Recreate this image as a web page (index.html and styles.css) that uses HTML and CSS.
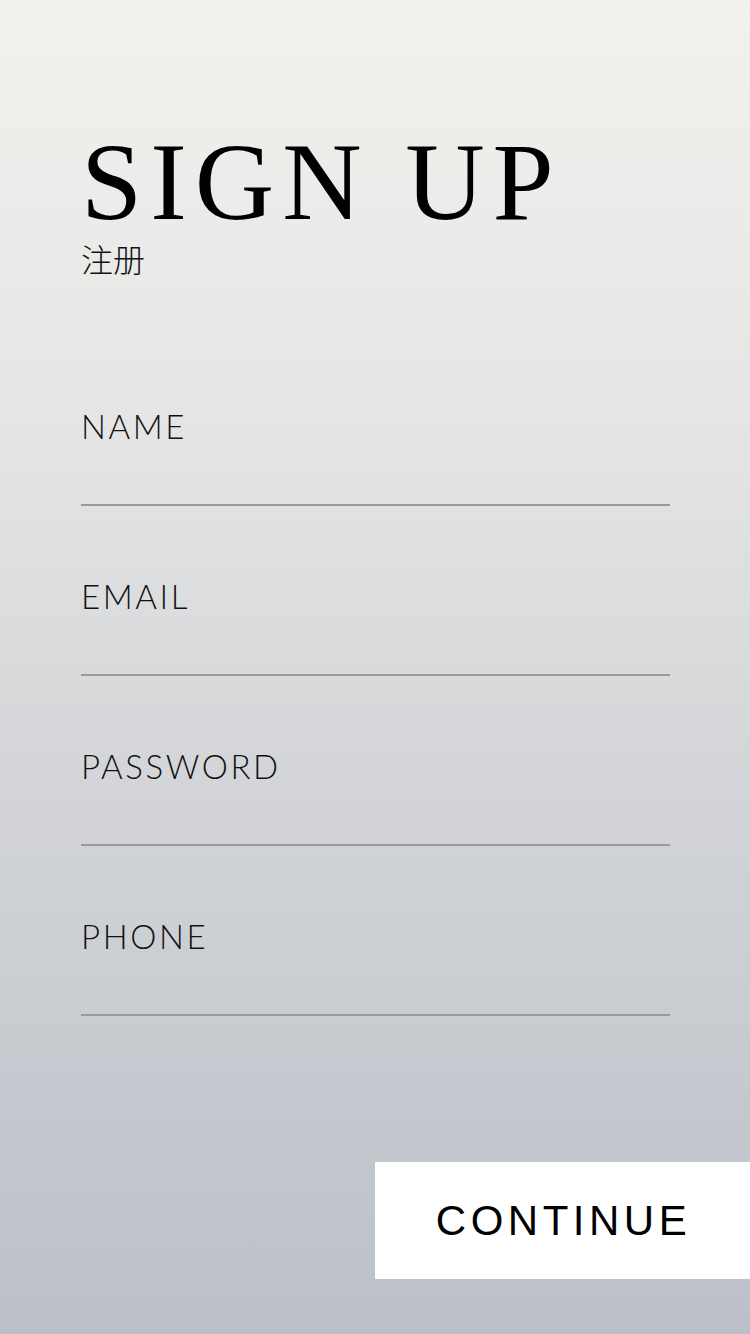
FILE: index.html
```html
<!DOCTYPE html>
<html lang="zh">
<head>
<meta charset="utf-8">
<link rel="stylesheet" href="styles.css">
</head>
<body>
<main class="screen">
  <header class="heading">
    <h1 class="title">SIGN UP</h1>
    <div class="subtitle">注册</div>
  </header>
  <form class="form">
    <label class="field"><span class="label">NAME</span></label>
    <label class="field"><span class="label">EMAIL</span></label>
    <label class="field"><span class="label">PASSWORD</span></label>
    <label class="field"><span class="label">PHONE</span></label>
  </form>
  <div class="actions">
    <button class="continue" type="button">CONTINUE</button>
  </div>
</main>
</body>
</html>
```

FILE: styles.css
```css
html, body {
  margin: 0;
  padding: 0;
}
body {
  width: 750px;
  height: 1334px;
  overflow: hidden;
}
.screen {
  width: 750px;
  height: 1334px;
  background: linear-gradient(180deg, #f2f1ed 0%, #e6e6e6 30%, #d2d4d7 60%, #bbc0c8 100%);
  display: flex;
  flex-direction: column;
  box-sizing: border-box;
  padding-top: 134px;
}
.heading {
  padding-left: 81px;
}
.title {
  margin: 0;
  font-family: "Liberation Serif", "Times New Roman", serif;
  font-weight: 400;
  font-size: 110px;
  line-height: 96px;
  letter-spacing: 8px;
  color: #000;
}
.subtitle {
  margin-top: 12px;
  font-family: "Noto Sans CJK SC", sans-serif;
  font-weight: 300;
  font-size: 32px;
  line-height: 32px;
  color: #111;
}
.form {
  margin: 132px 0 0;
  padding: 0 80px 0 81px;
  display: flex;
  flex-direction: column;
}
.field {
  display: block;
  padding: 70px 0 58px;
  border-bottom: 2px solid #9a9a9a;
}
.field:first-child {
  padding-top: 0;
}
.label {
  display: block;
  font-family: "Lato", "Liberation Sans", sans-serif;
  font-weight: 300;
  font-size: 33px;
  line-height: 40px;
  letter-spacing: 2.6px;
  color: #111;
}
.actions {
  display: flex;
  justify-content: flex-end;
  margin-top: 146px;
}
.continue {
  width: 375px;
  height: 117px;
  border: 0;
  background: #fff;
  font-family: "Liberation Sans", Arial, sans-serif;
  font-size: 42px;
  letter-spacing: 4.5px;
  color: #000;
  padding: 0 0 0 2px;
  cursor: pointer;
}
```
